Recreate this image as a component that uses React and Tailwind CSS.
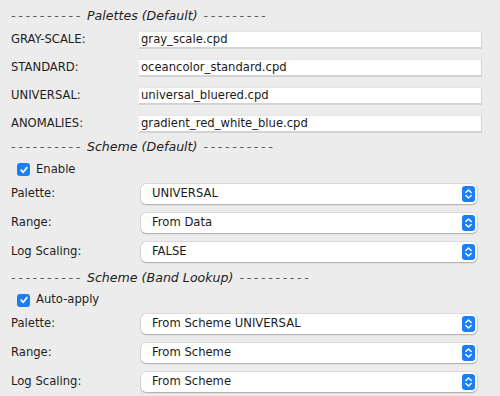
import React from "react";

const font = { fontFamily: '"DejaVu Sans", sans-serif' };

function Header({ title, trailing = 10 }) {
  return (
    <div className="h-[20px] flex items-center pl-[11px] text-[12.6px] italic text-[#1e1e1e] whitespace-nowrap">
      <span className="tracking-[2.65px] text-[#5a5a5a]">{"-".repeat(10)}</span>
      <span className="ml-[4px]">{title}</span>
      <span className="ml-[6px] tracking-[2.65px] text-[#5a5a5a]">{"-".repeat(trailing)}</span>
    </div>
  );
}

function FieldRow({ label, value }) {
  return (
    <div className="h-[28px] flex items-center">
      <div className="w-[139px] pl-[11px] text-[#1e1e1e]">{label}</div>
      <div className="w-[343px] h-[18px] bg-white border-b-2 border-r border-[#d3d3d3] border-t border-t-[#e6e6e6] flex items-center pl-[2px] text-[#1a1a1a]">
        {value}
      </div>
    </div>
  );
}

function Stepper() {
  return (
    <div className="w-[13px] h-[16px] rounded-[3px] bg-[#1b7ef6] flex items-center justify-center">
      <svg width="9" height="12" viewBox="0 0 9 12" fill="none">
        <path d="M1.8 4.6 L4.5 2 L7.2 4.6" stroke="white" strokeWidth="1.4" strokeLinecap="round" strokeLinejoin="round" />
        <path d="M1.8 7.4 L4.5 10 L7.2 7.4" stroke="white" strokeWidth="1.4" strokeLinecap="round" strokeLinejoin="round" />
      </svg>
    </div>
  );
}

function SelectRow({ label, value }) {
  return (
    <div className="h-[29px] flex items-center">
      <div className="w-[141px] pl-[11px] text-[#1e1e1e]">{label}</div>
      <div className="w-[336px] h-[20px] bg-white rounded-[5px] shadow-[0_0_0_0.5px_rgba(0,0,0,0.14),0_1px_1.5px_rgba(0,0,0,0.22)] flex items-center justify-between pl-[11px] pr-[2px] text-[#1a1a1a]">
        <span>{value}</span>
        <Stepper />
      </div>
    </div>
  );
}

function Check({ label, className }) {
  return (
    <div className={"flex items-center pl-[17px] " + className}>
      <div className="w-[13px] h-[13px] rounded-[3px] bg-[#1b7ef6] flex items-center justify-center">
        <svg width="10" height="10" viewBox="0 0 10 10" fill="none">
          <path d="M2.2 5.2 L4.2 7.3 L7.9 2.6" stroke="white" strokeWidth="1.7" strokeLinecap="round" strokeLinejoin="round" />
        </svg>
      </div>
      <span className="ml-[6px] text-[#1e1e1e]">{label}</span>
    </div>
  );
}

export default function App() {
  return (
    <div className="w-[500px] h-[396px] bg-[#ececec] overflow-hidden text-[11.6px] pt-[6px]" style={font}>
      <Header title="Palettes (Default)" trailing={9} />
      <FieldRow label="GRAY-SCALE:" value="gray_scale.cpd" />
      <FieldRow label="STANDARD:" value="oceancolor_standard.cpd" />
      <FieldRow label="UNIVERSAL:" value="universal_bluered.cpd" />
      <FieldRow label="ANOMALIES:" value="gradient_red_white_blue.cpd" />
      <div className="h-[18px] flex items-center pt-[1px]">
        <div className="w-full"><Header title="Scheme (Default)" /></div>
      </div>
      <Check label="Enable" className="h-[23px] pt-[4px]" />
      <SelectRow label="Palette:" value="UNIVERSAL" />
      <SelectRow label="Range:" value="From Data" />
      <SelectRow label="Log Scaling:" value="FALSE" />
      <div className="h-[22px] flex items-center pt-[3px]">
        <div className="w-full"><Header title="Scheme (Band Lookup)" /></div>
      </div>
      <Check label="Auto-apply" className="h-[21px] pt-[3px]" />
      <SelectRow label="Palette:" value="From Scheme UNIVERSAL" />
      <SelectRow label="Range:" value="From Scheme" />
      <SelectRow label="Log Scaling:" value="From Scheme" />
    </div>
  );
}
